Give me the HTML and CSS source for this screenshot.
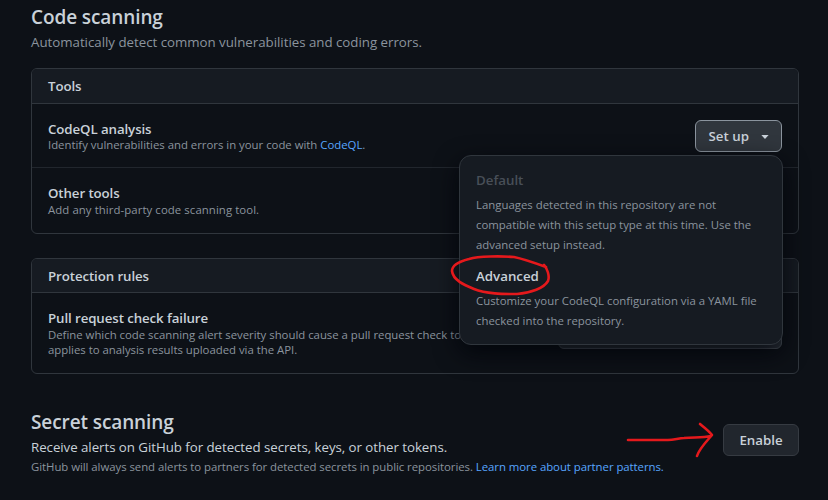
FILE: index.html
```html
<!DOCTYPE html>
<html lang="en">
<head>
<meta charset="utf-8">
<title>Code security and analysis</title>
<link rel="stylesheet" href="styles.css">
</head>
<body>
<main class="page">
  <section>
    <h2 class="heading">Code scanning</h2>
    <p class="lead muted">Automatically detect common vulnerabilities and coding errors.</p>

    <div class="box tools">
      <h3 class="box-header">Tools</h3>
      <div class="row row-codeql">
        <div>
          <h4 class="row-title">CodeQL analysis</h4>
          <p class="note">Identify vulnerabilities and errors in your code with <a href="#">CodeQL</a>.</p>
        </div>
        <div class="setup">
          <button class="btn btn-open">Set up
            <svg class="caret" viewBox="0 0 8 4" width="8" height="4"><path d="M.4 0h7.2L4 4z" fill="currentColor"/></svg>
          </button>
          <div class="menu">
            <h5 class="menu-title disabled">Default</h5>
            <p class="menu-text">Languages detected in this repository are not<br>compatible with this setup type at this time. Use the<br>advanced setup instead.</p>
            <h5 class="menu-title">Advanced</h5>
            <p class="menu-text">Customize your CodeQL configuration via a YAML file<br>checked into the repository.</p>
            <svg class="circle-mark" viewBox="450 254 104 44" width="104" height="44"><path d="M546 267C535 263 524 259 514 257C501 256 479 256 469 259C457 262 452 266 452 271C453 280 464 285 474 289C486 294 503 294 517 294C531 293 544 288 548 281C550 276 547 268 544 265"/></svg>
          </div>
        </div>
      </div>
      <div class="row">
        <div>
          <h4 class="row-title">Other tools</h4>
          <p class="note note-tools">Add any third-party code scanning tool.</p>
        </div>
      </div>
    </div>

    <div class="box rules">
      <h3 class="box-header">Protection rules</h3>
      <div class="row">
        <div>
          <h4 class="row-title">Pull request check failure</h4>
          <p class="note">Define which code scanning alert severity should cause a pull request check to<br>applies to analysis results uploaded via the API.</p>
        </div>
        <div class="severity"></div>
      </div>
    </div>
  </section>

  <section class="secret">
    <div>
      <h2 class="heading">Secret scanning</h2>
      <p class="lead">Receive alerts on GitHub for detected secrets, keys, or other tokens.</p>
      <p class="note partner">GitHub will always send alerts to partners for detected secrets in public repositories. <a href="#">Learn more about partner patterns.</a></p>
    </div>
    <button class="btn enable">Enable</button>
    <svg class="arrow-mark" viewBox="624 420 92 40" width="92" height="40"><path d="M628 440H668C674 440 679 438 684 438C694 437 702 438 711 436M700 424C705 428 709 431 712 435C706 442 699 449 697 456"/></svg>
  </section>
</main>
</body>
</html>
```
FILE: styles.css
```css
* { box-sizing: border-box; }

body {
  margin: 0;
  background: #0d1117;
  color: #c9d1d9;
  font: 13.3px/21px "Open Sans", "Noto Sans", sans-serif;
}

h2, h3, h4, h5, p { margin: 0; font-weight: 600; }
p { font-weight: 400; }
a { color: #58a6ff; text-decoration: none; }

.page {
  width: 828px;
  height: 500px;
  padding: 2px 29px 0 31px;
  overflow: hidden;
}

.heading { font-size: 19px; line-height: 30px; letter-spacing: -0.1px; }
.lead { line-height: 21px; letter-spacing: -0.05px; }
.muted { color: #8b949e; letter-spacing: -0.02px; }

.box { border: 1px solid #30363d; border-radius: 6px; }
.tools { height: 166px; margin-top: 15px; }
.rules { height: 116px; margin-top: 24px; }

.box-header {
  height: 35px;
  border-bottom: 1px solid #30363d;
  border-radius: 5px 5px 0 0;
  padding: 0 16px;
  background: #161b22;
  font-size: 13.3px;
  line-height: 34px;
  letter-spacing: -0.1px;
}
.rules .box-header { height: 34px; line-height: 35px; }

.row { display: flex; justify-content: space-between; padding: 17px 16px 0; }
.row-codeql { height: 64px; border-bottom: 1px solid #21262d; }
.row-codeql .note { margin-top: -1px; }
.row-title { font-size: 13.3px; line-height: 17px; letter-spacing: -0.1px; }
.note { color: #8b949e; font-size: 11.4px; line-height: 15px; letter-spacing: -0.02px; white-space: nowrap; }
.note-tools { letter-spacing: 0.07px; }

.btn {
  height: 32px;
  border: 1px solid #363b42;
  border-radius: 6px;
  padding: 0;
  background: #21262d;
  color: #c9d1d9;
  font: 600 13.3px/20px "Open Sans", "Noto Sans", sans-serif;
}

.setup { position: relative; height: 32px; margin-top: -1px; }
.btn-open {
  display: flex;
  align-items: center;
  width: 87px;
  padding-left: 12.5px;
  border-color: #8b949e;
  background: #30363d;
}
.caret { margin: 1px 0 0 12.5px; }

.menu {
  position: absolute;
  z-index: 1;
  top: 35px;
  right: -1px;
  width: 324px;
  height: 190px;
  border: 1px solid #30363d;
  border-radius: 12px;
  padding: 14px 16px;
  background: #161b22;
  box-shadow: 0 8px 24px rgba(1, 4, 9, 0.85);
}
.menu-title { font-size: 13.3px; line-height: 21px; }
.menu-title.disabled { color: #484f58; }
.menu-text { margin: 4px 0 11px; color: #8b949e; font-size: 11.4px; line-height: 20px; white-space: nowrap; }

.circle-mark, .arrow-mark {
  position: absolute;
  fill: none;
  stroke: #e5191c;
  stroke-width: 2.6;
  stroke-linecap: round;
  stroke-linejoin: round;
}
.circle-mark { top: 98px; left: -10px; }

.severity {
  flex: none;
  width: 224px;
  height: 32px;
  margin-top: 7px;
  margin-left: -200px;
  border: 1px solid #4a5058;
  border-radius: 6px;
  background: #2b3139;
}

.secret { position: relative; display: flex; justify-content: space-between; margin-top: 33px; }
.partner { line-height: 18px; letter-spacing: -0.05px; }
.enable { width: 76px; margin-top: 17px; }
.arrow-mark { top: 13px; left: 593px; }
```
